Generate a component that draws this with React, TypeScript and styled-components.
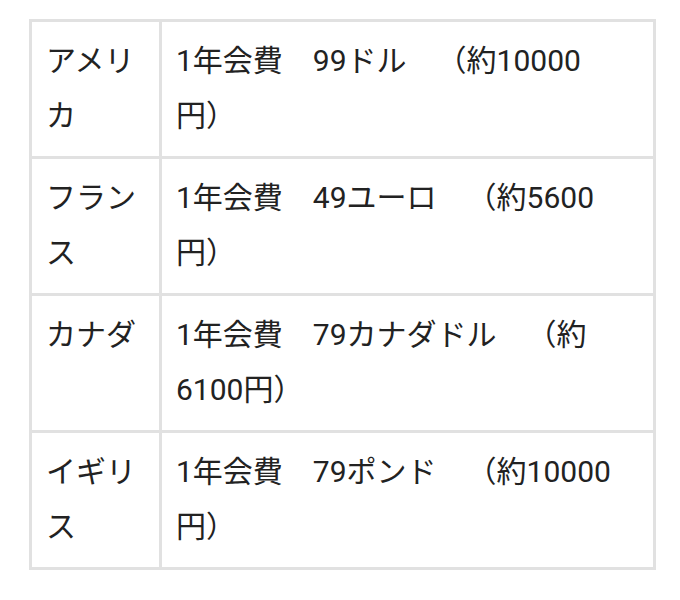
import * as React from 'react';
import styled, { createGlobalStyle } from 'styled-components';

interface FeeRow {
  country: string;
  fee: string;
}

const rows: FeeRow[] = [
  { country: 'アメリカ', fee: '1年会費　99ドル　（約10000円）' },
  { country: 'フランス', fee: '1年会費　49ユーロ　（約5600円）' },
  { country: 'カナダ', fee: '1年会費　79カナダドル　（約6100円）' },
  { country: 'イギリス', fee: '1年会費　79ポンド　（約10000円）' },
];

const App: React.FC = () => {
  return (
    <>
      <GlobalStyle />
      <Page>
        <Table>
          {rows.map(row => (
            <React.Fragment key={row.country}>
              <Cell>{row.country}</Cell>
              <Cell>{row.fee}</Cell>
            </React.Fragment>
          ))}
        </Table>
      </Page>
    </>
  );
};

export default App;

const GlobalStyle = createGlobalStyle`
  html, body {
    margin: 0;
    background: #ffffff;
  }

  body {
    font-family: Roboto, "Noto Sans CJK JP", sans-serif;
    color: #222222;
  }
`;

const Page = styled.div`
  width: 680px;
  height: 600px;
  padding: 19px 0 0 29px;
  box-sizing: border-box;
`;

const Table = styled.div`
  display: grid;
  grid-template-columns: 130px 494px;
  width: 627px;
  box-sizing: border-box;
  border-top: 3px solid #e1e1e1;
  border-left: 3px solid #e1e1e1;
`;

const Cell = styled.div`
  box-sizing: border-box;
  height: 137px;
  padding: 11px 14px;
  border-right: 3px solid #e1e1e1;
  border-bottom: 3px solid #e1e1e1;
  font-size: 30px;
  line-height: 55px;
  line-break: strict;
  text-spacing-trim: space-all;
`;
